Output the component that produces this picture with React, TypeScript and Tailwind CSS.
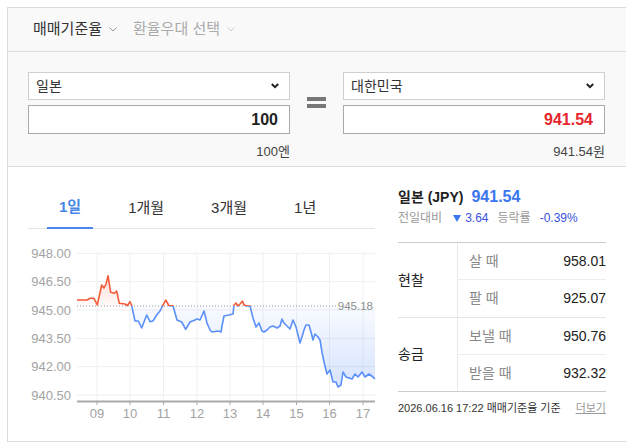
import React from "react";

const FONT = '"Liberation Sans", "Noto Sans CJK KR", sans-serif';

const pts: [number, number][] = [
  [77, 300], [82, 300], [87, 300], [90, 298.3], [94, 298.3], [97.3, 305], [99.5, 295], [101.7, 285],
  [104, 288], [106, 284], [108, 275.7], [110.7, 292.3], [114, 293.3], [116.7, 291], [119.3, 303.3],
  [125, 304], [127.3, 305.7], [130, 301.7], [131.7, 305.7], [135, 321], [138.3, 321], [141.7, 328],
  [146.7, 315], [150, 321.7], [153, 321], [156.7, 315], [160, 311], [165.7, 300], [169, 305.7],
  [173, 305.7], [177, 320], [181.7, 322], [185.7, 329.3], [190, 322], [195, 320], [197, 319],
  [200, 320], [204, 311], [207, 323], [210, 330], [212, 332], [218, 331], [221, 332], [222, 326],
  [224, 316], [229, 315], [233, 314], [234, 305], [236, 303], [238, 306], [240, 304], [242.5, 301],
  [244, 305], [247, 306], [250, 306], [253, 318], [256, 327], [259, 323], [262, 331], [264, 332],
  [267, 330], [270, 327], [273, 326], [277, 328], [280, 326], [282, 319], [284, 323], [287, 326],
  [290, 329], [293, 320], [296, 327], [298, 335], [300, 343], [302, 337], [304, 330], [306, 325],
  [309, 325], [311, 332], [313, 340], [315, 334], [318, 337], [320, 340], [322, 352], [324, 362],
  [327, 374], [330, 370], [333, 382], [336, 382], [338, 387], [341, 385], [343, 372], [346, 377],
  [349, 378], [352, 379], [355, 374], [358, 377], [362, 372], [365, 377], [369, 374], [373, 377],
  [375, 379],
];

const BASE = 306;
const linePath = pts.map((p, i) => `${i === 0 ? "M" : "L"}${p[0]} ${p[1]}`).join(" ");
const areaPath = `${linePath} L375 ${BASE} L77 ${BASE} Z`;

const yLabels = ["948.00", "946.50", "945.00", "943.50", "942.00", "940.50"];
const xs = [97, 130, 163.5, 197, 230, 263, 296.5, 329.5, 363];
const xLabels = ["09", "10", "11", "12", "13", "14", "15", "16", "17"];

function Chart() {
  return (
    <svg width={352} height={196} className="block">
      <defs>
        <clipPath id="above">
          <rect x={0} y={0} width={400} height={BASE} />
        </clipPath>
        <clipPath id="below">
          <rect x={0} y={BASE} width={400} height={200} />
        </clipPath>
        <linearGradient id="redFill" gradientUnits="userSpaceOnUse" x1="0" y1="274" x2="0" y2={BASE}>
          <stop offset="0" stopColor="#f25c3b" stopOpacity="0.22" />
          <stop offset="1" stopColor="#f25c3b" stopOpacity="0.03" />
        </linearGradient>
        <linearGradient id="blueFill" gradientUnits="userSpaceOnUse" x1="0" y1={BASE} x2="0" y2="392">
          <stop offset="0" stopColor="#5b8ff9" stopOpacity="0.04" />
          <stop offset="1" stopColor="#5b8ff9" stopOpacity="0.26" />
        </linearGradient>
      </defs>
      <g transform="translate(-28,-229)">
        {yLabels.map((l, i) => {
          const y = 253.3 + i * 28.35;
          return (
            <g key={l}>
              <line x1={77} x2={375} y1={y} y2={y} stroke="#eeeeee" strokeWidth={1} />
              <text x={71} y={y} dy="0.36em" textAnchor="end" fontSize={13} fill="#a3a3a3" fontFamily={FONT}>
                {l}
              </text>
            </g>
          );
        })}
        {xs.map((x, i) => (
          <g key={x}>
            <line x1={x} x2={x} y1={253} y2={401} stroke="#f0f0f0" strokeWidth={1} />
            <line x1={x} x2={x} y1={401} y2={405} stroke="#aaaaaa" strokeWidth={1} />
            <text x={x} y={418} textAnchor="middle" fontSize={13} fill="#a3a3a3" fontFamily={FONT}>
              {xLabels[i]}
            </text>
          </g>
        ))}
        <path d={areaPath} fill="url(#redFill)" clipPath="url(#above)" />
        <path d={areaPath} fill="url(#blueFill)" clipPath="url(#below)" />
        <line x1={77} x2={336} y1={BASE} y2={BASE} stroke="#9a9a9a" strokeWidth={1} strokeDasharray="1 2" />
        <text x={373} y={BASE} dy="0.36em" textAnchor="end" fontSize={11.5} fill="#8e8e8e" fontFamily={FONT}>
          945.18
        </text>
        <path d={linePath} fill="none" stroke="#f25c3b" strokeWidth={1.6} strokeLinejoin="round" clipPath="url(#above)" />
        <path d={linePath} fill="none" stroke="#5b8ff9" strokeWidth={1.6} strokeLinejoin="round" clipPath="url(#below)" />
        <line x1={77} x2={375} y1={401.5} y2={401.5} stroke="#aaaaaa" strokeWidth={2} />
      </g>
    </svg>
  );
}

function SmallChevron({ color }: { color: string }) {
  return (
    <svg width={8} height={5} viewBox="0 0 8 5" className="ml-[7px]">
      <path d="M0.5 0.5 L4 4 L7.5 0.5" fill="none" stroke={color} strokeWidth={1} />
    </svg>
  );
}

function SelectArrow() {
  return (
    <svg width={8} height={6} viewBox="0 0 8 6">
      <path d="M0.8 1 L4 4.2 L7.2 1" fill="none" stroke="#222" strokeWidth={2} />
    </svg>
  );
}

function Converter({ country, value, sub, red }: { country: string; value: string; sub: string; red?: boolean }) {
  return (
    <div className="w-[262px] flex flex-col">
      <div className="h-[28px] bg-white border border-[#cfcfcf] flex items-center justify-between pl-[7px] pr-[10px] text-[14px] text-[#333]">
        <span>{country}</span>
        <SelectArrow />
      </div>
      <div className="mt-[5px] h-[29px] bg-white border border-[#a9a9a9] flex items-center justify-end pr-[11px]">
        <span className={`text-[16px] font-bold ${red ? "text-[#e6252d]" : "text-[#222]"}`}>{value}</span>
      </div>
      <div className="mt-[10px] text-right text-[13px] text-[#444] leading-[16px]">{sub}</div>
    </div>
  );
}

function RateRow({ label, value, h, border }: { label: string; value: string; h: string; border?: boolean }) {
  return (
    <div className={`${h} flex items-center justify-between pl-[11px] ${border ? "border-b border-[#ececec]" : ""}`}>
      <span className="text-[14px] text-[#888]">{label}</span>
      <span className="text-[14px] text-[#222]">{value}</span>
    </div>
  );
}

export default function App() {
  return (
    <div className="w-[626px] h-[445px] overflow-hidden bg-white" style={{ fontFamily: FONT }}>
      <div className="ml-[7px] mt-[7px] w-[622px] h-[435px] border border-[#dcdcdc] flex flex-col">
        <div className="h-[44px] shrink-0 border-b border-[#dcdcdc] bg-[#f9f9f9] flex items-center pl-[25px]">
          <span className="text-[15px] text-[#333]">매매기준율</span>
          <SmallChevron color="#999" />
          <span className="ml-[16px] text-[15px] text-[#aaa]">환율우대 선택</span>
          <SmallChevron color="#ccc" />
        </div>
        <div className="h-[115px] shrink-0 border-b border-[#dcdcdc] bg-[#f9f9f9] pt-[20px] pl-[20px] flex items-start">
          <Converter country="일본" value="100" sub="100엔" />
          <div className="mx-[17px] w-[19px] mt-[25px] flex flex-col gap-[3px]">
            <div className="h-[4px] bg-[#777]" />
            <div className="h-[4px] bg-[#777]" />
          </div>
          <Converter country="대한민국" value="941.54" sub="941.54원" red />
        </div>
        <div className="flex-1 flex bg-white">
          <div className="w-[367px] pl-[20px] pt-[21px] flex flex-col">
            <div className="h-[41px] border-b border-[#e5e5e5] flex pl-[19px] gap-[23px]">
              <div className="h-[41px] -mb-px px-[12px] flex items-center border-b-2 border-[#4a86e8] text-[15px] font-bold text-[#4a86e8]">
                1일
              </div>
              <div className="h-[40px] px-[12px] flex items-center text-[15px] text-[#333]">1개월</div>
              <div className="h-[40px] px-[12px] flex items-center text-[15px] text-[#333]">3개월</div>
              <div className="h-[40px] px-[12px] flex items-center text-[15px] text-[#333]">1년</div>
            </div>
            <div>
              <Chart />
            </div>
          </div>
          <div className="ml-[23px] w-[208px] pt-[20px] flex flex-col">
            <div className="h-[20px] flex items-center">
              <span className="text-[14px] font-bold text-[#222]">일본 (JPY)</span>
              <span className="ml-[8px] text-[16px] font-bold text-[#3a76f0]">941.54</span>
            </div>
            <div className="mt-[3px] h-[16px] flex items-center text-[12px]">
              <span className="text-[#999]">전일대비</span>
              <svg width={8} height={7} viewBox="0 0 8 7" className="ml-[11px]">
                <path d="M0 0 L8 0 L4 7 Z" fill="#3a76f0" />
              </svg>
              <span className="ml-[4px] text-[#3a52e0]">3.64</span>
              <span className="ml-[9px] text-[#999]">등락률</span>
              <span className="ml-[9px] text-[#3a52e0]">-0.39%</span>
            </div>
            <div className="mt-[16px] border-t border-b border-[#cccccc]">
              <div className="flex border-b border-[#e5e5e5]">
                <div className="w-[60px] border-r border-[#e8e8e8] flex items-center text-[14px] text-[#222]">현찰</div>
                <div className="flex-1">
                  <RateRow label="살 때" value="958.01" h="h-[37px]" border />
                  <RateRow label="팔 때" value="925.07" h="h-[37px]" />
                </div>
              </div>
              <div className="flex">
                <div className="w-[60px] border-r border-[#e8e8e8] flex items-center text-[14px] text-[#222]">송금</div>
                <div className="flex-1">
                  <RateRow label="보낼 때" value="950.76" h="h-[37px]" border />
                  <RateRow label="받을 때" value="932.32" h="h-[36px]" />
                </div>
              </div>
            </div>
            <div className="mt-[8px] h-[16px] flex items-center justify-between text-[11px]">
              <span className="text-[#333]">2026.06.16 17:22 매매기준율 기준</span>
              <span className="text-[#999] underline">더보기</span>
            </div>
          </div>
        </div>
      </div>
    </div>
  );
}
